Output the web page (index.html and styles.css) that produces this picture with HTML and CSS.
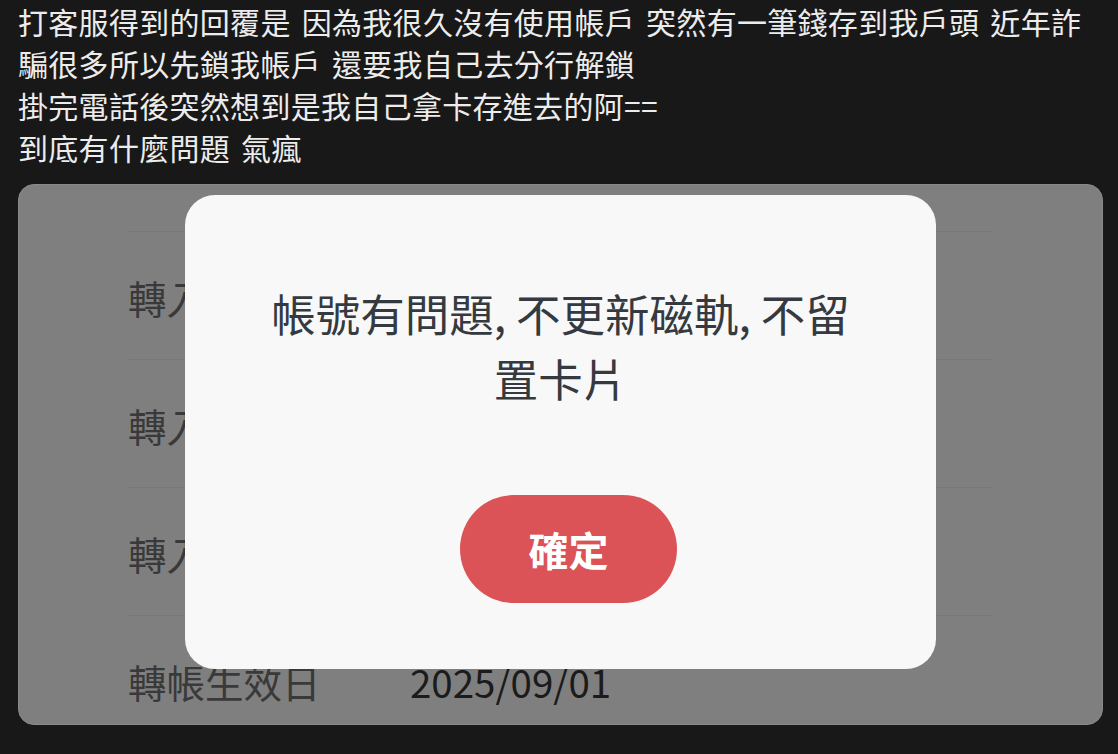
FILE: index.html
```html
<!DOCTYPE html>
<html lang="zh-Hant">
<head>
<meta charset="utf-8">
<title>帳號有問題</title>
<link rel="stylesheet" href="styles.css">
</head>
<body>
<div class="post">
  <p class="post-text">打客服得到的回覆是 因為我很久沒有使用帳戶 突然有一筆錢存到我戶頭 近年詐<br>騙很多所以先鎖我帳戶 還要我自己去分行解鎖<br>掛完電話後突然想到是我自己拿卡存進去的阿==<br>到底有什麼問題 氣瘋</p>
</div>
<div class="card">
  <ul class="rows">
    <li class="row-top"></li>
    <li class="row"><span class="label">轉入戶名</span><span class="value">王小明</span></li>
    <li class="row"><span class="label">轉入金額</span><span class="value">1,000</span></li>
    <li class="row"><span class="label">轉入備註</span><span class="value">-</span></li>
    <li class="row row-last"><span class="label">轉帳生效日</span><span class="value">2025/09/01</span></li>
  </ul>
  <div class="modal">
    <p class="modal-text">帳號有問題, 不更新磁軌, 不留置卡片</p>
    <button class="modal-btn" type="button">確定</button>
  </div>
</div>
</body>
</html>
```
FILE: styles.css
```css
html, body {
  margin: 0;
  padding: 0;
}
body {
  background: #181818;
  width: 1118px;
  height: 754px;
  overflow: hidden;
  font-family: "Noto Sans CJK TC", "Noto Sans", sans-serif;
}
.post {
  padding: 0 18px;
}
.post-text {
  margin: 0;
  color: #ececec;
  font-size: 30px;
  line-height: 42px;
  letter-spacing: 0.3px;
  word-spacing: 4px;
  white-space: nowrap;
}
.card {
  position: relative;
  margin: 16px 15px 0 18px;
  height: 539px;
  background: #7f7f7f;
  border: 1px solid #8a8a8a;
  border-radius: 16px;
  overflow: hidden;
}
.rows {
  list-style: none;
  margin: 0;
  padding: 0 110px 0 109px;
}
.row-top {
  height: 46px;
  border-bottom: 1px solid #787878;
}
.row {
  display: flex;
  align-items: center;
  box-sizing: border-box;
  height: 128px;
  padding-top: 2px;
  border-bottom: 1px solid #787878;
  font-size: 38.5px;
  line-height: 50px;
}
.row-last {
  border-bottom: none;
}
.label {
  width: 282px;
  flex: none;
  color: #393939;
}
.value {
  color: #1b1b1b;
}
.modal {
  position: absolute;
  left: 166px;
  top: 10px;
  width: 751px;
  height: 474px;
  box-sizing: border-box;
  background: #f8f8f8;
  border-radius: 30px;
  display: flex;
  flex-direction: column;
  align-items: center;
  padding-top: 85px;
}
.modal-text {
  margin: 0;
  max-width: 610px;
  text-align: center;
  color: #343a40;
  font-size: 44.5px;
  line-height: 65px;
}
.modal-btn {
  margin-top: 85px;
  margin-left: 16px;
  width: 217px;
  height: 108px;
  border: none;
  border-radius: 54px;
  background: #dc5357;
  color: #ffffff;
  font-family: "Noto Sans CJK TC", sans-serif;
  font-size: 40px;
  font-weight: 700;
  padding: 0;
  letter-spacing: 0;
}
```
